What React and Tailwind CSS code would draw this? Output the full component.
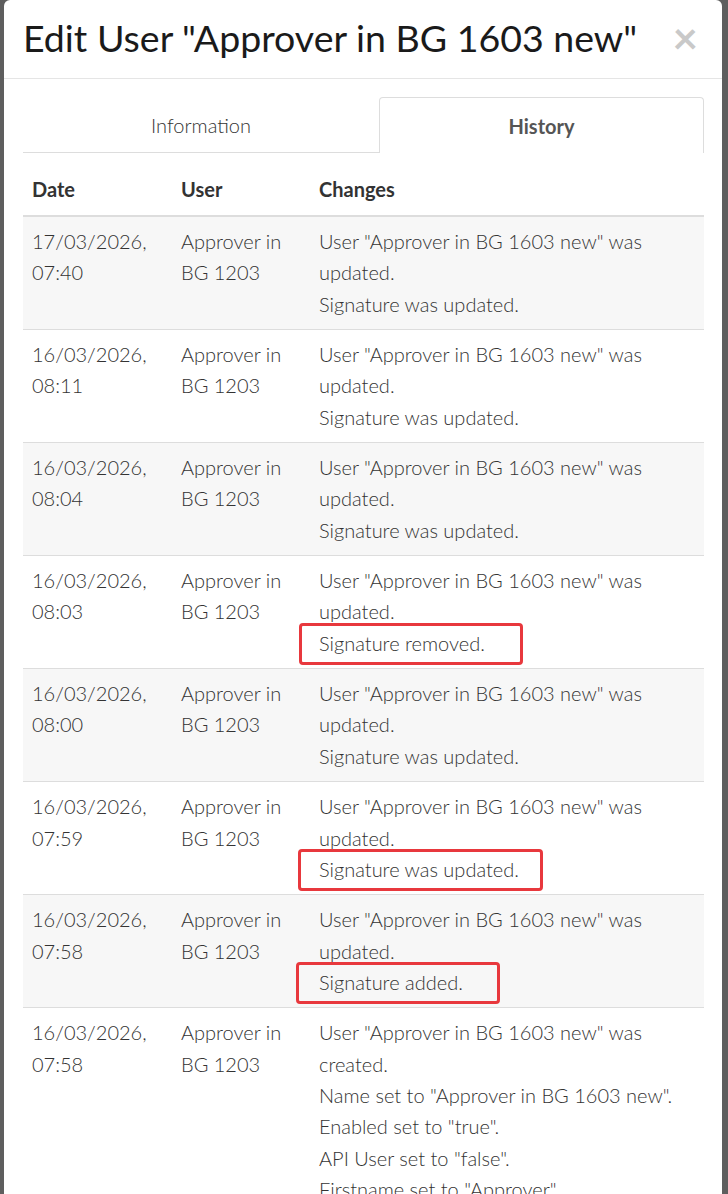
import React from "react";

const rows = [
  { date: "17/03/2026,", time: "07:40", lines: ["Signature was updated."] },
  { date: "16/03/2026,", time: "08:11", lines: ["Signature was updated."] },
  { date: "16/03/2026,", time: "08:04", lines: ["Signature was updated."] },
  { date: "16/03/2026,", time: "08:03", lines: ["Signature removed."], box: "-left-[20px] w-[224px]" },
  { date: "16/03/2026,", time: "08:00", lines: ["Signature was updated."] },
  { date: "16/03/2026,", time: "07:59", lines: ["Signature was updated."], box: "-left-[21px] w-[245px]" },
  { date: "16/03/2026,", time: "07:58", lines: ["Signature added."], box: "-left-[23px] w-[204px]" },
  {
    date: "16/03/2026,",
    time: "07:58",
    created: true,
    lines: [
      'Name set to "Approver in BG 1603 new".',
      'Enabled set to "true".',
      'API User set to "false".',
      'Firstname set to "Approver".',
      'Lastname set to "in BG 1603 new".',
    ],
  },
];

const Marked = ({ children, box }) => (
  <span className="relative inline-block">
    {children}
    <span
      className={`absolute -top-[5px] -bottom-[6px] rounded-[4px] border-[3px] border-[#e8383d] pointer-events-none ${box}`}
    />
  </span>
);

export default function App() {
  return (
    <div
      className="h-[1194px] overflow-hidden bg-[#5e5e5e] flex items-start"
      style={{ fontFamily: "Lato, 'Open Sans', sans-serif" }}
    >
      <div className="ml-[4px] w-[718px] shrink-0 bg-white rounded-t-[6px] flex flex-col">
        {/* header */}
        <div className="h-[79px] shrink-0 flex items-center justify-between pl-[19px] pr-[24px] border-b border-[#e5e5e5]">
          <h2 className="text-[37.5px] text-[#1a1a1a] font-normal leading-none pb-[2px] whitespace-nowrap">
            Edit User "Approver in BG 1603 new"
          </h2>
          <span className="text-[44px] font-bold text-[#c9c9c9] leading-none pb-[4px]">×</span>
        </div>

        {/* body */}
        <div className="pl-[19px] pr-[18px] pt-[18px]">
          {/* tabs */}
          <div className="flex">
            <div className="w-[356px] h-[56px] flex items-center justify-center border-b border-[#dddddd] text-[20px] font-light text-[#333]">
              Information
            </div>
            <div className="flex-1 h-[56px] flex items-center justify-center border border-b-0 border-[#dddddd] rounded-t-[4px] text-[20px] font-bold text-[#555]">
              History
            </div>
          </div>

          {/* table */}
          <table className="w-full border-collapse text-left">
            <thead>
              <tr className="border-b-2 border-[#dddddd] align-bottom text-[20px] leading-[31px] font-bold text-[#333]">
                <th className="w-[149px] px-[9px] h-[63px] pb-[10px]">Date</th>
                <th className="w-[138px] px-[9px] pb-[10px]">User</th>
                <th className="px-[9px] pb-[10px]">Changes</th>
              </tr>
            </thead>
            <tbody>
              {rows.map((r, i) => (
                <tr
                  key={i}
                  className={`border-t border-[#dddddd] align-top text-[20px] leading-[31.35px] font-light text-[#333] ${
                    i % 2 === 0 ? "bg-[#f7f7f7]" : "bg-white"
                  }`}
                >
                  <td className="px-[9px] py-[9px]">
                    <div>{r.date}</div>
                    <div>{r.time}</div>
                  </td>
                  <td className="px-[9px] py-[9px]">
                    <div>Approver in</div>
                    <div>BG 1203</div>
                  </td>
                  <td className="px-[9px] py-[9px]">
                    <div>User "Approver in BG 1603 new" was</div>
                    <div>{r.created ? "created." : "updated."}</div>
                    {r.lines.map((l, j) => (
                      <div key={j}>{r.box ? <Marked box={r.box}>{l}</Marked> : l}</div>
                    ))}
                  </td>
                </tr>
              ))}
            </tbody>
          </table>
        </div>
      </div>
    </div>
  );
}
